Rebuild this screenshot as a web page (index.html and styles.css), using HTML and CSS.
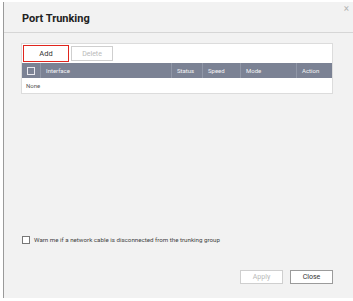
FILE: index.html
```html
<!DOCTYPE html>
<html lang="en">
<head>
  <meta charset="UTF-8" />
  <title>Port Trunking</title>
  <link rel="stylesheet" href="styles.css">
</head>
<body>
  <div class="dialog">
    <div class="header">
      <h1>Port Trunking</h1>
      <span class="close-x">&#215;</span>
    </div>

    <div class="content">
      <div class="panel">
        <div class="toolbar">
          <button class="btn add">Add</button>
          <button class="btn" disabled>Delete</button>
        </div>
        <table class="grid">
          <thead>
            <tr>
              <th class="col-check"><span class="box light"></span></th>
              <th class="col-iface">Interface</th>
              <th class="col-status">Status</th>
              <th class="col-speed">Speed</th>
              <th class="col-mode">Mode</th>
              <th class="col-action">Action</th>
            </tr>
          </thead>
          <tbody>
            <tr>
              <td colspan="6" class="empty">None</td>
            </tr>
          </tbody>
        </table>
      </div>

      <label class="warn">
        <span class="box"></span>
        Warn me if a network cable is disconnected from the trunking group
      </label>
    </div>

    <div class="footer">
      <button class="btn" disabled>Apply</button>
      <button class="btn">Close</button>
    </div>
  </div>
</body>
</html>
```

FILE: styles.css
```css
body {
  margin: 0;
  background: #ffffff;
  font-family: Roboto, "Liberation Sans", sans-serif;
}

.dialog {
  margin: 2px 0 0 3px;
  height: 296px;
  border-left: 1px solid #9a9a9a;
  background: #f2f2f2;
  display: flex;
  flex-direction: column;
}

.header {
  height: 30px;
  border-bottom: 1px solid #d6d6d6;
  display: flex;
  align-items: center;
  justify-content: space-between;
  padding: 0 4px 0 18px;
}

h1 {
  margin: 2px 0 0 0;
  font-size: 11px;
  font-weight: bold;
  color: #222;
}

.close-x {
  align-self: flex-start;
  margin-top: 1px;
  font-size: 10px;
  color: #b5b5b5;
}

.content {
  flex: 1;
  display: flex;
  flex-direction: column;
  padding: 10px 20px 0 17px;
}

.panel {
  background: #ffffff;
  border: 1px solid #dcdcdc;
}

.toolbar {
  display: flex;
  gap: 2px;
  padding: 1px 0 1px 1px;
}

.btn {
  height: 14px;
  width: 43px;
  padding: 0;
  font-family: inherit;
  font-size: 7px;
  color: #333;
  background: #ffffff;
  border: 1px solid #9b9b9b;
  border-radius: 0;
}

.btn:disabled {
  color: #b9b9b9;
  border-color: #cfcfcf;
}

.toolbar .btn {
  height: 15px;
  margin-top: 1px;
  width: 42px;
}

.toolbar .add {
  margin-top: 0;
  height: 17px;
  width: 46px;
  font-size: 7.5px;
  border: 1px solid #e0261e;
}

.grid {
  width: 100%;
  border-collapse: collapse;
  font-size: 6px;
}

.grid th {
  height: 15px;
  padding: 0 0 0 5px;
  background: #7b8294;
  color: #f4f4f6;
  font-weight: normal;
  text-align: left;
  border-left: 1px solid #9097a7;
}

.grid th:first-child {
  border-left: none;
}

.col-check { width: 13px; }
.col-status { width: 25px; }
.col-speed { width: 32px; }
.col-mode { width: 50px; }
.col-action { width: 30px; }

.grid td.empty {
  height: 15px;
  padding: 0 0 0 4px;
  color: #555;
}

.box {
  display: inline-block;
  width: 6px;
  height: 6px;
  border: 1px solid #777;
  background: #fff;
  vertical-align: middle;
}

.box.light {
  border-color: #e8e8ee;
  background: transparent;
}

.warn {
  margin-top: auto;
  margin-bottom: 26px;
  display: flex;
  align-items: center;
  gap: 4px;
  padding-left: 1px;
  font-size: 6.2px;
  color: #444;
}

.footer {
  display: flex;
  justify-content: flex-end;
  gap: 7px;
  padding: 0 20px 14px 0;
}

.footer .btn {
  width: 43px;
  height: 14px;
}
```
